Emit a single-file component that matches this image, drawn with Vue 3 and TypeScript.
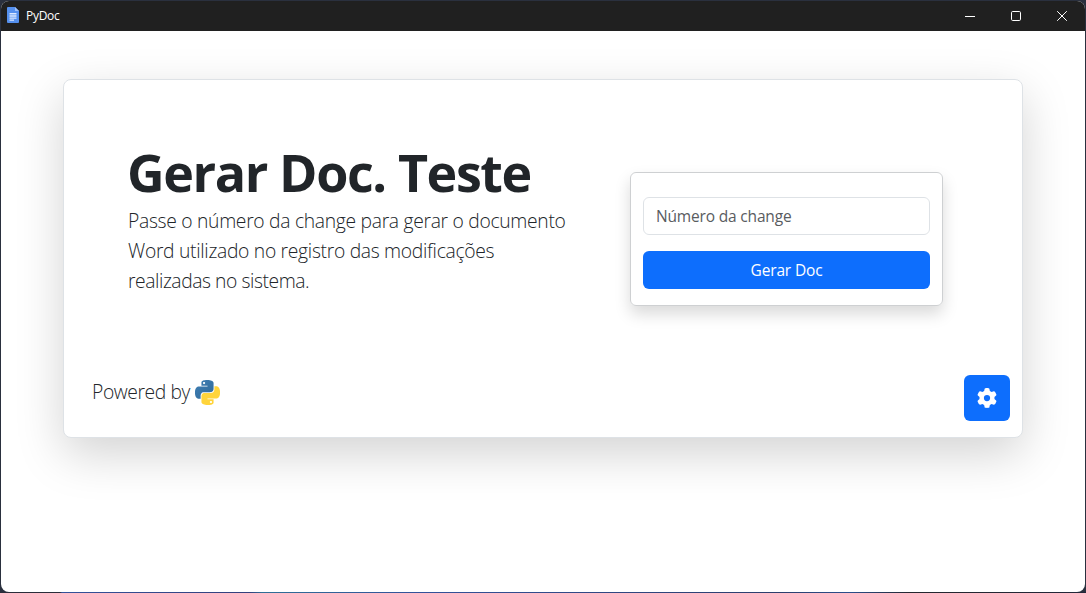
<script setup lang="ts">
import { ref } from 'vue'

const change = ref<string>('')
const description: string[] = [
  'Passe o número da change para gerar o documento',
  'Word utilizado no registro das modificações',
  'realizadas no sistema.',
]
const snakePath =
  'M14.25.18l.9.2.73.26.59.3.45.32.34.34.25.34.16.33.1.3.04.26.02.2-.01.13V8.5l-.05.63-.13.55-.21.46-.26.38-.3.31-.33.25-.35.19-.35.14-.33.1-.3.07-.26.04-.21.02H8.77l-.69.05-.59.14-.5.22-.41.27-.33.32-.27.35-.2.36-.15.37-.1.35-.07.32-.04.27-.02.21v3.06H3.17l-.21-.03-.28-.07-.32-.12-.35-.18-.36-.26-.36-.36-.35-.46-.32-.59-.28-.73-.21-.88-.14-1.05-.05-1.23.06-1.22.16-1.04.24-.87.32-.71.36-.57.4-.44.42-.33.42-.24.4-.16.36-.1.32-.05.24-.01h.16l.06.01h8.16v-.83H6.18l-.01-2.75-.02-.37.05-.34.11-.31.17-.28.25-.26.31-.23.38-.2.44-.18.51-.15.58-.12.64-.1.71-.06.77-.04.84-.02 1.27.05zm-6.3 1.98l-.23.33-.08.41.08.41.23.34.33.22.41.09.41-.09.33-.22.23-.34.08-.41-.08-.41-.23-.33-.33-.22-.41-.09-.41.09z'
</script>

<template>
  <div class="desktop">
    <div class="window">
      <header class="titlebar">
        <svg class="doc-icon" width="12" height="16" viewBox="0 0 12 16">
          <path d="M1 0h7l4 4v11a1 1 0 0 1-1 1H1a1 1 0 0 1-1-1V1a1 1 0 0 1 1-1z" fill="#5590ee" />
          <path d="M8 0l4 4H8z" fill="#9dc0fa" />
          <path d="M2.5 6h7v1.5h-7zM2.5 8.2h7v1.5h-7zM2.5 10.4h7v1.4h-7zM2.5 12.4h4.5v1.3h-4.5z" fill="#dce9ff" />
        </svg>
        <span class="app-name">PyDoc</span>
        <div class="controls">
          <span><svg width="10" height="10" viewBox="0 0 10 10"><path d="M0 5.5h10" /></svg></span>
          <span><svg width="10" height="10" viewBox="0 0 10 10"><rect x=".5" y=".5" width="9" height="9" rx="1.2" /></svg></span>
          <span><svg width="10" height="10" viewBox="0 0 10 10"><path d="M.2.2l9.6 9.6M9.8.2L.2 9.8" /></svg></span>
        </div>
      </header>

      <main class="page">
        <section class="card">
          <div class="hero">
            <div class="intro">
              <h1>Gerar Doc. Teste</h1>
              <p>
                <span v-for="(line, i) in description" :key="i" class="line" :class="'line-' + i">{{ line }}</span>
              </p>
            </div>
            <form class="form" @submit.prevent>
              <input v-model="change" type="text" placeholder="Número da change" />
              <button type="submit">Gerar Doc</button>
            </form>
          </div>
          <footer class="foot">
            <div class="powered">
              <span class="powered-text">Powered by</span>
              <svg class="python" width="25" height="25" viewBox="0 0 24 24">
                <defs>
                  <linearGradient id="py-blue" x1="0" y1="0" x2="1" y2="1">
                    <stop offset="0" stop-color="#3f7fb5" />
                    <stop offset="1" stop-color="#306998" />
                  </linearGradient>
                </defs>
                <path :d="snakePath" fill="url(#py-blue)" />
                <path :d="snakePath" fill="#ffd43b" transform="rotate(180 12 12)" />
              </svg>
            </div>
            <button class="settings" type="button" aria-label="Configurações">
              <svg width="20" height="20" viewBox="0 0 512 512">
                <path
                  fill="#fff"
                  d="M495.9 166.6c3.2 8.7 .5 18.4-6.4 24.6l-43.3 39.4c1.1 8.3 1.7 16.8 1.7 25.4s-.6 17.1-1.7 25.4l43.3 39.4c6.9 6.2 9.6 15.9 6.4 24.6c-4.4 11.9-9.7 23.3-15.8 34.3l-4.7 8.1c-6.6 11-14 21.4-22.1 31.2c-5.9 7.2-15.7 9.6-24.5 6.8l-55.7-17.7c-13.4 10.3-28.2 18.9-44 25.4l-12.5 57.1c-2 9.1-9 16.3-18.2 17.8c-13.8 2.3-28 3.5-42.5 3.5s-28.7-1.2-42.5-3.5c-9.2-1.5-16.2-8.7-18.2-17.8l-12.5-57.1c-15.8-6.5-30.6-15.1-44-25.4L83.1 425.9c-8.8 2.8-18.6 .3-24.5-6.8c-8.1-9.8-15.5-20.2-22.1-31.2l-4.7-8.1c-6.1-11-11.4-22.4-15.8-34.3c-3.2-8.7-.5-18.4 6.4-24.6l43.3-39.4C64.6 273.1 64 264.6 64 256s.6-17.1 1.7-25.4L22.4 191.2c-6.9-6.2-9.6-15.9-6.4-24.6c4.4-11.9 9.7-23.3 15.8-34.3l4.7-8.1c6.6-11 14-21.4 22.1-31.2c5.9-7.2 15.7-9.6 24.5-6.8l55.7 17.7c13.4-10.3 28.2-18.9 44-25.4l12.5-57.1c2-9.1 9-16.3 18.2-17.8C227.3 1.2 241.5 0 256 0s28.7 1.2 42.5 3.5c9.2 1.5 16.2 8.7 18.2 17.8l12.5 57.1c15.8 6.5 30.6 15.1 44 25.4l55.7-17.7c8.8-2.8 18.6-.3 24.5 6.8c8.1 9.8 15.5 20.2 22.1 31.2l4.7 8.1c6.1 11 11.4 22.4 15.8 34.3zM256 336a80 80 0 1 0 0-160 80 80 0 1 0 0 160z"
                />
              </svg>
            </button>
          </footer>
        </section>
      </main>
    </div>
  </div>
</template>

<style>
body {
  margin: 0;
  overflow: hidden;
}
</style>

<style scoped>
* {
  box-sizing: border-box;
}
.desktop {
  width: 1086px;
  height: 593px;
  padding: 1px;
  background: linear-gradient(90deg, #2a2d3a 0 60px, #34529a 62px, #34407c 250px, #2f6f96 262px, #34529a 420px, #2c3e6c 780px, #2b4f8c 850px, #24262e 910px, #22283a 1086px) 0 592px / 1086px 1px no-repeat,
    #2a303e;
  font-family: 'Open Sans', 'Noto Sans', sans-serif;
  color: #212529;
}
.window {
  height: 591px;
  display: flex;
  flex-direction: column;
  border-radius: 8px;
  overflow: hidden;
  background: #fff;
}
.titlebar {
  flex: none;
  height: 30px;
  display: flex;
  align-items: center;
  padding-left: 6px;
  background: #202020;
  color: #fff;
}
.doc-icon {
  margin-top: -2px;
}
.app-name {
  margin-left: 7px;
  margin-top: -1px;
  font-size: 12px;
  letter-spacing: -0.3px;
}
.controls {
  margin-left: auto;
  display: flex;
}
.controls span {
  width: 46px;
  height: 30px;
  display: flex;
  align-items: center;
  justify-content: center;
}
.controls svg {
  fill: none;
  stroke: #fff;
  stroke-width: 1;
}
.page {
  flex: 1;
  padding: 48px 62px 0;
}
.card {
  height: 359px;
  border: 1px solid #dee2e6;
  border-radius: 8px;
  box-shadow: 0 16px 48px rgba(0, 0, 0, 0.175);
  background: #fff;
  display: flex;
  flex-direction: column;
  justify-content: space-between;
}
.hero {
  display: flex;
  justify-content: space-between;
  padding: 60px 79px 0 64px;
}
h1 {
  margin: 0 0 2px -1px;
  font-size: 52px;
  line-height: 64px;
  font-weight: 700;
  letter-spacing: -1.4px;
  white-space: nowrap;
}
p {
  margin: 0;
}
.line {
  display: block;
  font-size: 19.3px;
  line-height: 30px;
  font-weight: 300;
  letter-spacing: -0.3px;
  white-space: nowrap;
}
.line-2 {
  letter-spacing: -0.43px;
}
.form {
  width: 313px;
  height: 134px;
  margin-top: 32px;
  padding: 24px 12px 16px;
  display: flex;
  flex-direction: column;
  gap: 16px;
  border: 1px solid #ced0d2;
  border-radius: 6px;
  box-shadow: 0 8px 16px rgba(0, 0, 0, 0.15);
}
input {
  flex: none;
  height: 38px;
  padding: 6px 12px;
  border: 1px solid #dee2e6;
  border-radius: 6px;
  background: #fff;
  font: 400 15.5px/24px 'Open Sans', 'Noto Sans', sans-serif;
  letter-spacing: -0.17px;
  outline: none;
}
input::placeholder {
  color: #595c5f;
  opacity: 1;
}
button {
  border: 0;
  border-radius: 6px;
  background: #0d6efd;
  color: #fff;
}
.form button {
  flex: none;
  height: 38px;
  font: 400 15.5px/24px 'Open Sans', 'Noto Sans', sans-serif;
  letter-spacing: -0.15px;
}
.foot {
  display: flex;
  justify-content: space-between;
  align-items: flex-end;
  padding: 0 12px 16px 28px;
}
.powered {
  display: flex;
  align-items: center;
  height: 30px;
  margin-bottom: 15px;
}
.powered-text {
  width: 103px;
  font-size: 19.3px;
  font-weight: 300;
  letter-spacing: -0.4px;
  white-space: nowrap;
}
.python {
  flex: none;
  margin-top: 2px;
}
.settings {
  width: 46px;
  height: 46px;
  padding: 0;
  display: flex;
  align-items: center;
  justify-content: center;
}
</style>
